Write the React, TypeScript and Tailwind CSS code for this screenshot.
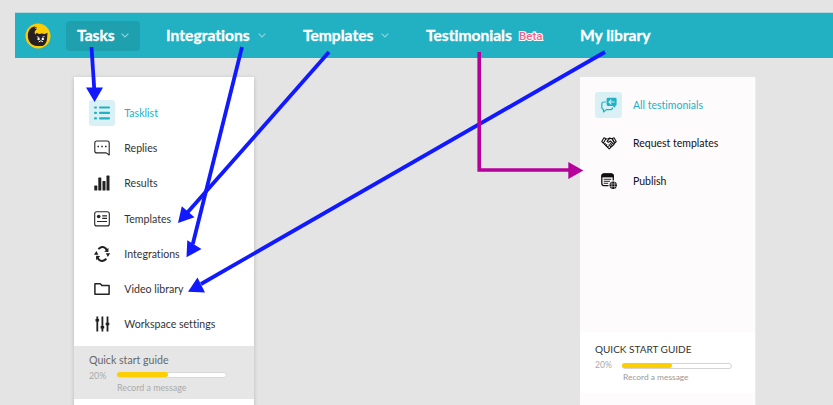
import type { ReactNode } from 'react';

const Logo = () => (
  <svg viewBox="0 0 26 26" className="size-[26px] shrink-0">
    <circle cx="13" cy="13" r="12.5" fill="#fccd05" />
    <path
      d="M9.6 3.6C5.4 4.2 2.7 8.2 2.9 12.8C3.1 18.8 6.4 22.8 12 23H17.6C20.6 21.4 22 18.6 22.1 15.2L22.5 9.8L19.8 11C18.2 10.2 15.6 10.2 14 10.9L11.6 9.8L10.6 11.4C9.4 10.4 9.3 8.6 10.4 7.6C11.4 7 12 6 11.6 4.6Z"
      fill="#281f20"
    />
    <path d="M11.8 13.8L14.4 14.5M19.6 13.4L17.4 14.2" stroke="#fff" strokeWidth="0.8" />
    <circle cx="13.6" cy="16.1" r="1.2" fill="#fff" />
    <circle cx="17.8" cy="15.9" r="1.2" fill="#fff" />
    <path d="M13.8 18.9L15.8 17.8L17.9 18.7" stroke="#fff" strokeWidth="1" fill="none" />
    <path d="M9.8 4.9L11.4 5.5" stroke="#fff" strokeWidth="0.7" />
  </svg>
);

const Chevron = () => (
  <svg viewBox="0 0 8 5" className="h-[5px] w-2" fill="none">
    <path d="M0.6 0.6L4 4L7.4 0.6" stroke="#8ed5de" strokeWidth="1.1" />
  </svg>
);

const ListIcon = () => (
  <svg viewBox="0 0 16 16" className="size-4" fill="#22b1c3">
    <rect x="0" y="1.4" width="3" height="2.2" rx="1" />
    <rect x="5" y="1.4" width="11" height="2.2" rx="0.8" />
    <rect x="0" y="6.8" width="3" height="2.2" rx="1" />
    <rect x="5" y="6.8" width="11" height="2.2" rx="0.8" />
    <rect x="0" y="12.2" width="3" height="2.2" rx="1" />
    <rect x="5" y="12.2" width="11" height="2.2" rx="0.8" />
  </svg>
);

const ReplyIcon = () => (
  <svg viewBox="0 0 16 16" className="size-4" fill="none" stroke="#242424">
    <path d="M3 1H13.2C14.5 1 15.2 1.8 15.2 3V15L12.2 12.9H3C1.6 12.9 0.8 12.2 0.8 10.9V3C0.8 1.8 1.6 1 3 1Z" strokeWidth="1.1" strokeLinejoin="round" />
    <path d="M3.5 6.4H5M7.3 6.4H8.8M11 6.4H12.5" strokeWidth="1.5" />
  </svg>
);

const BarsIcon = () => (
  <svg viewBox="0 0 16 16" className="size-4" fill="#202020">
    <rect x="0.3" y="10.6" width="3" height="5" rx="0.6" />
    <rect x="4.3" y="2.6" width="3" height="13" rx="0.6" />
    <rect x="8.5" y="6" width="3" height="9.6" rx="0.6" />
    <rect x="12.5" y="0.6" width="3" height="15" rx="0.6" />
  </svg>
);

const CardIcon = () => (
  <svg viewBox="0 0 16 16" className="size-4" fill="none" stroke="#242424">
    <rect x="0.7" y="0.7" width="14.6" height="14.2" rx="2" strokeWidth="1.1" />
    <circle cx="4.7" cy="5.5" r="1.8" fill="#242424" stroke="none" />
    <path d="M8.2 4.9H13M8.2 7.4H13M3 10.5H13" strokeWidth="1.1" />
  </svg>
);

const SyncIcon = () => (
  <svg viewBox="0 0 16 16" className="size-4" fill="none" stroke="#202020">
    <path d="M4.4 3.2Q8 -0.8 11.8 2.6L13.3 5M12.4 12.8Q8.4 16.8 4.7 13.4L3.2 11" strokeWidth="2" />
    <path d="M10.2 5.7L14.4 1.7V6.1ZM6.3 10.1L2.1 9.8V14.3Z" fill="#202020" stroke="none" />
    <path d="M0 8.8L2.4 4.9L4.4 8.8ZM16.2 7.2L13.8 11.1L11.9 7.2Z" fill="#202020" stroke="none" />
  </svg>
);

const FolderIcon = () => (
  <svg viewBox="0 0 16 16" className="size-4" fill="none" stroke="#242424" strokeWidth="1.5" strokeLinejoin="round">
    <path d="M0.9 2.8H6.2L8.1 4.6H15.1V13.2H0.9Z" />
  </svg>
);

const SlidersIcon = () => (
  <svg viewBox="0 0 16 16" className="size-4" fill="none" stroke="#202020">
    <path d="M3.3 0.5V15.5M8.4 0.5V15.5M13.5 0.5V15.5" strokeWidth="1.8" />
    <path d="M1.5 4.2H5.1M6.6 11.2H10.2M11.7 8H15.3" strokeWidth="2.6" />
  </svg>
);

const ChatIcon = () => (
  <svg viewBox="0 0 16 16" className="size-4" fill="none" stroke="#22b1c3">
    <path d="M4.9 5H2.7C1.4 5 0.8 5.6 0.8 6.8V10.6C0.8 11.8 1.5 12.3 2.5 12.3V15L5.4 12.6H9.5C11 12.6 11.5 12 11.5 10.6" strokeWidth="1.2" strokeLinejoin="round" />
    <path d="M7 0.8H14.2Q15.6 0.8 15.6 2.2V7.5Q15.6 8.9 14.2 8.9V11L11.7 8.9H7Q5.6 8.9 5.6 7.5V2.2Q5.6 0.8 7 0.8Z" fill="#22b1c3" stroke="none" />
    <path d="M13.6 5H8.1M10.3 2.7L8 5L10.3 7.3" stroke="#d9f1f5" strokeWidth="1.1" />
  </svg>
);

const HandshakeIcon = () => (
  <svg viewBox="0 0 16 14" className="h-[14px] w-4" fill="none" stroke="#111" strokeWidth="1.1" strokeLinejoin="round">
    <path d="M3 1.7L0.8 5.6L2.3 7L5 2.7ZM13 1.7L15.2 5.6L13.7 7L11 2.7Z" />
    <path d="M4.8 3L7.4 2.8L8.6 2.1L11.2 2.8L13.5 6.8L12.8 8.7L8.2 12.8L2.5 7.2" />
    <path d="M8.5 2.7L6 5.4L7.3 6.4L9.3 5L12.8 8.5M4.4 7L3.4 8.8M6 8.2L4.8 10.2M7.5 9.7L6.3 11.6M9.1 7.1L11.4 9.8M7.9 8.3L10 11.1" />
  </svg>
);

const PublishIcon = () => (
  <svg viewBox="0 0 16 16" className="size-4" fill="none" stroke="#111">
    <path d="M7.5 12.6H2.8C1.4 12.6 0.8 11.9 0.8 10.6V3C0.8 1.8 1.6 1 2.8 1H10.2C11.5 1 12.3 1.8 12.3 3V7.5" strokeWidth="1.3" />
    <path d="M1 3.9V2.8Q1 1 2.8 1H10.2Q12.1 1 12.1 2.8V3.9Z" fill="#111" />
    <path d="M2.7 6.3H10.3M2.7 8.3H9M2.7 10.3H7.2" strokeWidth="0.9" />
    <circle cx="12.2" cy="12.2" r="3.7" fill="#111" stroke="none" />
    <path d="M8.6 11H15.8M8.6 13.5H15.8M10.8 8.6V15.6M13.6 8.6V15.6" stroke="#fff" strokeWidth="0.45" />
  </svg>
);

const leftItems: { label: string; icon: ReactNode }[] = [
  { label: 'Tasklist', icon: <ListIcon /> },
  { label: 'Replies', icon: <ReplyIcon /> },
  { label: 'Results', icon: <BarsIcon /> },
  { label: 'Templates', icon: <CardIcon /> },
  { label: 'Integrations', icon: <SyncIcon /> },
  { label: 'Video library', icon: <FolderIcon /> },
  { label: 'Workspace settings', icon: <SlidersIcon /> },
];

const rightItems: { label: string; icon: ReactNode }[] = [
  { label: 'All testimonials', icon: <ChatIcon /> },
  { label: 'Request templates', icon: <HandshakeIcon /> },
  { label: 'Publish', icon: <PublishIcon /> },
];

function Progress({ value, track }: { value: string; track: string }) {
  return (
    <div className={`h-[6px] w-[110px] rounded-full border bg-white ${track}`}>
      <div className="-mt-px -ml-px h-[5px] rounded-full bg-[#fccf05]" style={{ width: value }} />
    </div>
  );
}

function Connectors() {
  return (
    <svg viewBox="0 0 833 405" className="pointer-events-none absolute inset-0 h-[405px] w-[833px]" fill="none">
      <g stroke="#1019ff" strokeWidth="3.8">
        <path d="M91.5 47L94.3 90" />
        <path d="M242 47L192.8 244" />
        <path d="M329 52L187 213" />
        <path d="M605 52L201 284" />
      </g>
      <g fill="#1019ff">
        <path d="M86 87.5H103L94.6 102Z" />
        <path d="M187.3 240.3L201.5 248.9L186.5 257.3Z" />
        <path d="M181.8 206.2L194.5 217.3L178 223Z" />
        <path d="M197.5 277.6L205 292.5L188 291.8Z" />
      </g>
      <path d="M479.2 52V170H570" stroke="#b5009b" strokeWidth="3.6" />
      <path d="M568.3 162V179L583.3 170.5Z" fill="#b5009b" />
    </svg>
  );
}

export default function App() {
  return (
    <div className="relative h-[405px] w-[833px] overflow-hidden bg-[#e4e4e4] pt-3 pl-[15px] font-['Lato','Liberation_Sans',sans-serif] [font-variant-ligatures:none]">
      <header className="flex h-[46px] items-center border-t border-[#b3d4d8] bg-[#22b1c3] pl-[10px] text-[15.6px] leading-5 font-bold whitespace-nowrap text-white [-webkit-text-stroke:0.3px_white]">
        <Logo />
        <nav className="flex items-center">
          <div className="ml-[15px] flex h-[30px] w-[74px] items-center rounded-[4px] bg-[#1ea0af] pl-[11px]">
            <span className="w-11 pb-px">Tasks</span>
            <Chevron />
          </div>
          <div className="ml-[26px] flex w-[137px] items-center">
            <span className="w-[91.5px] pb-px tracking-[0.03px]">Integrations</span>
            <Chevron />
          </div>
          <div className="flex w-[123px] items-center">
            <span className="w-[77.5px] pb-px">Templates</span>
            <Chevron />
          </div>
          <div className="flex w-[154px] items-center">
            <span className="w-[93px] pb-px">Testimonials</span>
            <span className="font-['Roboto','Liberation_Sans',sans-serif] text-[11.5px] font-medium text-[#f5608f] [paint-order:stroke] [-webkit-text-stroke:2px_white]">Beta</span>
          </div>
          <span className="pb-px">My library</span>
        </nav>
      </header>

      <main className="mt-[19px] ml-[59px] flex items-start">
        <aside className="h-[340px] w-[180px] shrink-0 bg-white pt-[18.5px] shadow-[0_1px_4px_rgba(0,0,0,0.2)]">
          <ul className="text-[10.6px] text-[#333]">
            {leftItems.map((item, i) => (
              <li key={item.label} className={`flex h-[35.2px] items-center pl-[15px] ${i === 0 ? 'text-[#22b1c3]' : ''}`}>
                <span className={`flex size-[26px] items-center justify-center rounded-[3px] ${i === 0 ? 'bg-[#d9f1f5]' : ''}`}>{item.icon}</span>
                <span className="ml-[9.3px] pt-[1.8px] whitespace-nowrap">{item.label}</span>
              </li>
            ))}
          </ul>
          <section className="mt-[4.1px] h-[53px] bg-[#e6e6e6] px-[15px] pt-[7px]">
            <h2 className="text-[10.6px] leading-[14px] text-[#666]">Quick start guide</h2>
            <div className="mt-[2px] flex h-[13px] items-center text-[8.8px] text-[#aaa]">
              <span className="w-[27.5px]">20%</span>
              <Progress value="51px" track="border-[#d8d8d8]" />
            </div>
            <p className="ml-[28px] text-[8.9px] leading-[11px] text-[#aaa]">Record a message</p>
          </section>
        </aside>

        <aside className="ml-[326px] h-[340px] w-[176px] shrink-0 border-r border-[#ececec] bg-[#fdfbfc] pt-[9px]">
          <ul className="h-[246px] text-[10.5px] text-[#111]">
            {rightItems.map((item, i) => (
              <li key={item.label} className={`flex h-[38px] items-center pl-[15px] ${i === 0 ? 'text-[#22b1c3]' : ''}`}>
                <span className={`flex size-[26.5px] items-center justify-center rounded-[3px] pl-px ${i === 0 ? 'bg-[#d9f1f5]' : ''}`}>{item.icon}</span>
                <span className="ml-[11.5px] pt-[1.5px] whitespace-nowrap">{item.label}</span>
              </li>
            ))}
          </ul>
          <section className="h-[61px] bg-white px-[15px] pt-[10px]">
            <h2 className="text-[10px] leading-[14px] text-[#333]">QUICK START GUIDE</h2>
            <div className="mt-[3px] flex h-[13px] items-center text-[8.6px] text-[#aaa]">
              <span className="w-[27px]">20%</span>
              <Progress value="50px" track="border-[#d4d4d4]" />
            </div>
            <p className="ml-[28px] text-[8.4px] leading-[11px] text-[#999]">Record a message</p>
          </section>
        </aside>
      </main>
      <Connectors />
    </div>
  );
}
